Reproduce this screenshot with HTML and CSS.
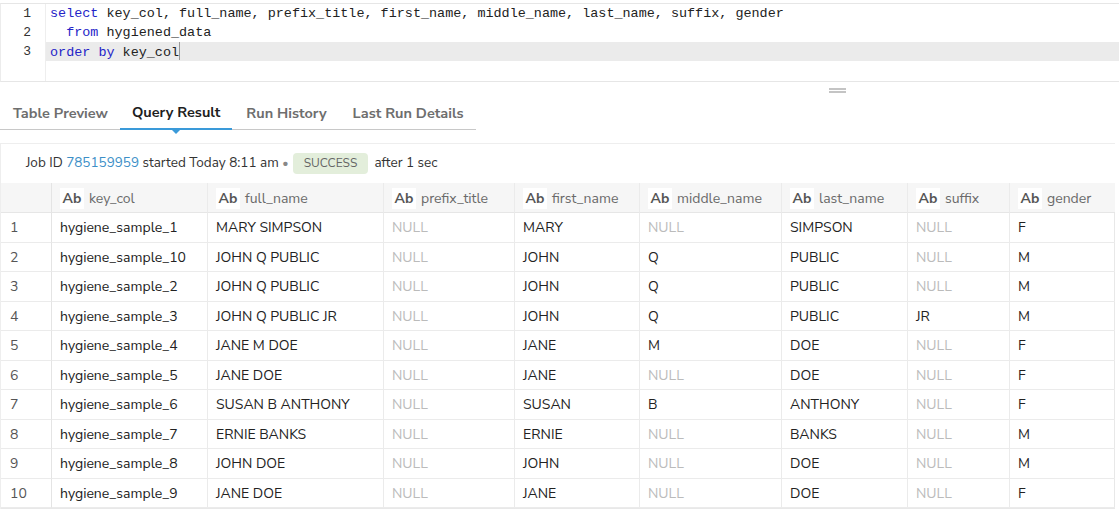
FILE: index.html
```html
<!DOCTYPE html>
<html>
<head>
<meta charset="utf-8">
<link rel="stylesheet" href="styles.css">
</head>
<body>
<div class="editor">
  <div class="gutter">
    <div class="ln">1</div>
    <div class="ln">2</div>
    <div class="ln">3</div>
  </div>
  <div class="code">
    <div class="line"><span class="kw">select</span> key_col, full_name, prefix_title, first_name, middle_name, last_name, suffix, gender</div>
    <div class="line">  <span class="kw">from</span> hygiened_data</div>
    <div class="line active"><span class="kw">order by</span> key_col<span class="cursor"></span></div>
  </div>
</div>
<div class="tabzone">
  <div class="handle"></div>
  <div class="tabs">
    <div class="tab">Table Preview</div>
    <div class="tab on">Query Result</div>
    <div class="tab">Run History</div>
    <div class="tab">Last Run Details</div>
  </div>
</div>
<div class="panel">
  <div class="job">Job ID <span class="link">785159959</span> started Today 8:11 am <span class="dot">•</span> <span class="badge">SUCCESS</span> after 1 sec</div>
  <div class="grid">
    <div class="h idx"></div>
    <div class="h"><span class="ab">Ab</span>key_col</div>
    <div class="h"><span class="ab">Ab</span>full_name</div>
    <div class="h"><span class="ab">Ab</span>prefix_title</div>
    <div class="h"><span class="ab">Ab</span>first_name</div>
    <div class="h"><span class="ab">Ab</span>middle_name</div>
    <div class="h"><span class="ab">Ab</span>last_name</div>
    <div class="h"><span class="ab">Ab</span>suffix</div>
    <div class="h"><span class="ab">Ab</span>gender</div>

    <div class="c idx">1</div><div class="c">hygiene_sample_1</div><div class="c">MARY SIMPSON</div><div class="c n">NULL</div><div class="c">MARY</div><div class="c n">NULL</div><div class="c">SIMPSON</div><div class="c n">NULL</div><div class="c">F</div>
    <div class="c idx">2</div><div class="c">hygiene_sample_10</div><div class="c">JOHN Q PUBLIC</div><div class="c n">NULL</div><div class="c">JOHN</div><div class="c">Q</div><div class="c">PUBLIC</div><div class="c n">NULL</div><div class="c">M</div>
    <div class="c idx">3</div><div class="c">hygiene_sample_2</div><div class="c">JOHN Q PUBLIC</div><div class="c n">NULL</div><div class="c">JOHN</div><div class="c">Q</div><div class="c">PUBLIC</div><div class="c n">NULL</div><div class="c">M</div>
    <div class="c idx">4</div><div class="c">hygiene_sample_3</div><div class="c">JOHN Q PUBLIC JR</div><div class="c n">NULL</div><div class="c">JOHN</div><div class="c">Q</div><div class="c">PUBLIC</div><div class="c">JR</div><div class="c">M</div>
    <div class="c idx">5</div><div class="c">hygiene_sample_4</div><div class="c">JANE M DOE</div><div class="c n">NULL</div><div class="c">JANE</div><div class="c">M</div><div class="c">DOE</div><div class="c n">NULL</div><div class="c">F</div>
    <div class="c idx">6</div><div class="c">hygiene_sample_5</div><div class="c">JANE DOE</div><div class="c n">NULL</div><div class="c">JANE</div><div class="c n">NULL</div><div class="c">DOE</div><div class="c n">NULL</div><div class="c">F</div>
    <div class="c idx">7</div><div class="c">hygiene_sample_6</div><div class="c">SUSAN B ANTHONY</div><div class="c n">NULL</div><div class="c">SUSAN</div><div class="c">B</div><div class="c">ANTHONY</div><div class="c n">NULL</div><div class="c">F</div>
    <div class="c idx">8</div><div class="c">hygiene_sample_7</div><div class="c">ERNIE BANKS</div><div class="c n">NULL</div><div class="c">ERNIE</div><div class="c n">NULL</div><div class="c">BANKS</div><div class="c n">NULL</div><div class="c">M</div>
    <div class="c idx">9</div><div class="c">hygiene_sample_8</div><div class="c">JOHN DOE</div><div class="c n">NULL</div><div class="c">JOHN</div><div class="c n">NULL</div><div class="c">DOE</div><div class="c n">NULL</div><div class="c">M</div>
    <div class="c idx">10</div><div class="c">hygiene_sample_9</div><div class="c">JANE DOE</div><div class="c n">NULL</div><div class="c">JANE</div><div class="c n">NULL</div><div class="c">DOE</div><div class="c n">NULL</div><div class="c">F</div>
  </div>
</div>
</body>
</html>
```

FILE: styles.css
```css
* { box-sizing: border-box; }
body {
  margin: 0;
  width: 1119px;
  height: 513px;
  overflow: hidden;
  background: #fff;
  font-family: "Nunito Sans", Lato, "Open Sans", sans-serif;
  color: #222;
}
.editor {
  margin-top: 3px;
  height: 79px;
  display: flex;
  border-top: 1px solid #e6e6e6;
  border-bottom: 1px solid #e6e6e6;
  border-left: 1px solid #ececec;
}
.gutter {
  width: 45px;
  border-right: 1px solid #eeeeee;
  font-family: "Liberation Mono", monospace;
  font-size: 13px;
  color: #333;
}
.ln {
  height: 19px;
  line-height: 19px;
  text-align: right;
  padding-right: 14px;
}
.code {
  flex: 1;
  font-family: "Liberation Mono", monospace;
  font-size: 13.45px;
  color: #222;
}
.line {
  height: 19px;
  line-height: 19px;
  padding-left: 4px;
  white-space: pre;
}
.line.active { background: #ebebeb; }
.kw { color: #2424c8; }
.cursor {
  display: inline-block;
  width: 1px;
  height: 18px;
  background: #999;
  vertical-align: -4px;
}
.tabzone {
  position: relative;
  height: 48px;
  display: flex;
  align-items: flex-end;
}
.handle {
  position: absolute;
  left: 829px;
  top: 6px;
  width: 17px;
  height: 5px;
  border-top: 2px solid #c4c4c4;
  border-bottom: 2px solid #c4c4c4;
}
.tabs {
  display: flex;
  width: 476px;
  height: 34px;
  border-bottom: 1px solid #c8c8c8;
  padding-left: 1px;
}
.tab {
  padding: 3px 12px 0;
  font-size: 14.5px;
  font-weight: 700;
  color: #6e6e6e;
  line-height: 28px;
  position: relative;
  white-space: nowrap;
}
.tab:nth-child(3) { padding: 3px 13px 0 14px; }
.tab:nth-child(4) { padding: 3px 12px 0 13px; }
.tab.on {
  color: #1e1e1e;
  border-bottom: 2px solid #3a9ad9;
  margin-bottom: -1px;
  line-height: 26px;
}
.tab.on::after {
  content: "";
  position: absolute;
  left: 50%;
  margin-left: -6px;
  top: 32px;
  border-left: 6px solid transparent;
  border-right: 6px solid transparent;
  border-top: 6px solid #3a9ad9;
}
.panel {
  margin-top: 13px;
  border-top: 1px solid #eeeeee;
  border-left: 1px solid #eeeeee;
  width: 1115px;
}
.job {
  height: 39px;
  padding-left: 25px;
  padding-top: 8px;
  font-size: 13.5px;
  color: #333;
  line-height: 22px;
  white-space: nowrap;
}
.link { color: #3d8fc7; }
.dot { color: #888; font-size: 12px; }
.badge {
  display: inline-block;
  width: 75px;
  height: 21px;
  line-height: 21px;
  text-align: center;
  background: #e3eedb;
  border-radius: 4px;
  color: #666;
  font-size: 12px;
  margin: 0 3px 0 1px;
}
.grid {
  display: grid;
  grid-template-columns: 51px 156px 176px 131px 125px 142px 126px 102px 105px;
  grid-template-rows: 30px repeat(10, 29.5px);
  border-right: 1px solid #e8e8e8;
  border-bottom: 1px solid #e8e8e8;
}
.h {
  background: #f6f6f6;
  border-right: 1px solid #ebebeb;
  border-bottom: 1px solid #e6e6e6;
  display: flex;
  align-items: center;
  padding-left: 8px;
  padding-top: 1px;
  font-size: 14px;
  color: #6a6a6a;
  white-space: nowrap;
}
.h.idx { border-right: 1px solid #e4e4e4; }
.ab {
  display: inline-block;
  background: #fff;
  width: 24px;
  height: 21px;
  line-height: 21px;
  text-align: center;
  font-weight: 700;
  color: #555;
  margin-right: 5px;
}
.c {
  border-right: 1px solid #ebebeb;
  border-bottom: 1px solid #ebebeb;
  display: flex;
  align-items: center;
  padding-left: 8px;
  padding-top: 1px;
  font-size: 14px;
  color: #222;
  white-space: nowrap;
}
.c.idx { padding-left: 9px; color: #555; border-right: 1px solid #e4e4e4; }
.c.n { color: #bbbbbb; }
.grid > :nth-child(9n) { border-right: none; }
```
